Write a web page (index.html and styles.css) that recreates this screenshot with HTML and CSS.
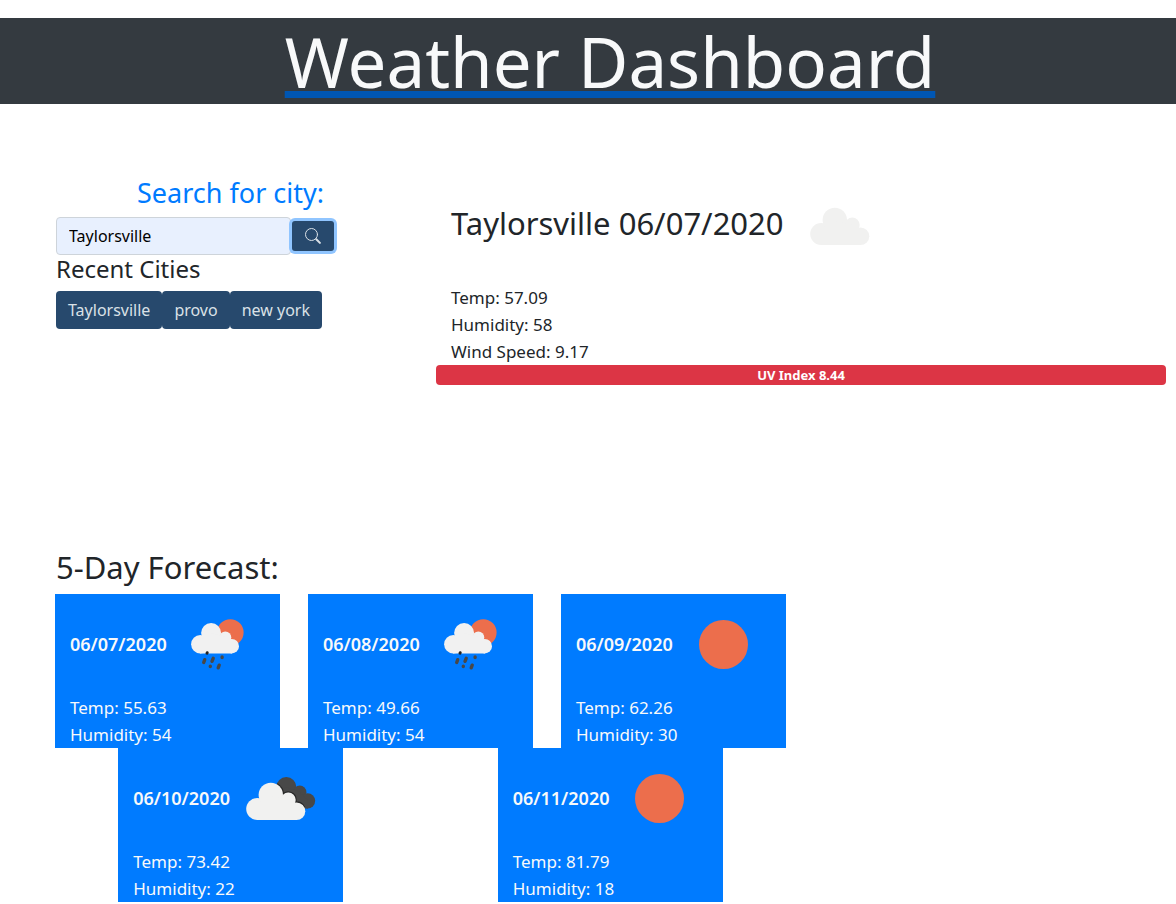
FILE: index.html
```html
<!DOCTYPE html>
<html lang="en">
<head>
<meta charset="utf-8">
<meta name="viewport" content="width=device-width, initial-scale=1">
<title>Weather Dashboard</title>
<link rel="stylesheet" href="styles.css">
</head>
<body>
<svg class="symbols" aria-hidden="true">
  <symbol id="cloud" viewBox="0 0 100 100">
    <g fill="#f1f1f0">
      <circle cx="27.2" cy="61" r="11"/>
      <circle cx="40.8" cy="46.9" r="12.2"/>
      <circle cx="58.3" cy="52" r="7.4"/>
      <circle cx="66.5" cy="63.2" r="8.8"/>
      <path d="M27 72V58l14-10 18 4 8 11v9z"/>
    </g>
  </symbol>
  <symbol id="broken-clouds" viewBox="0 0 100 100">
    <g fill="#484848">
      <circle cx="56.3" cy="39" r="10"/>
      <circle cx="69.8" cy="44.2" r="6.6"/>
      <circle cx="77.6" cy="52.8" r="7.6"/>
      <path d="M50 44l6-5 14 5 8 9v7.400H66z"/>
    </g>
    <g fill="none" stroke="#272727" stroke-width="1.400">
      <path d="M47 35.900a12.600 12.600 0 0 1 6.400 10.500"/>
      <path d="M52.500 46.500a7.800 7.800 0 0 1 13.500 5.500v2a9 9 0 0 1 8.500 5.500"/>
    </g>
    <use href="#cloud"/>
  </symbol>
  <symbol id="rain" viewBox="0 0 100 100">
    <circle cx="63.3" cy="38.5" r="13.3" fill="#ec6e4c"/>
    <g fill="#f1f1f1">
      <circle cx="33.3" cy="50.3" r="9.2"/>
      <circle cx="44.1" cy="39" r="10"/>
      <circle cx="58.3" cy="43.4" r="6"/>
      <circle cx="64.7" cy="52.2" r="7.300"/>
      <path d="M33 59.500V48l11-9 15 4 6 9v7.500z"/>
    </g>
    <g stroke="#484848" stroke-width="3.400" stroke-linecap="round">
      <path d="M37.700 65.700l-1 2.800M46.200 64.300l-1.200 3M55.100 63v.5M43.300 72.200v.3M52.200 71.200l-1 2.600"/>
      <path d="M40.200 58.700l-.2.500" stroke="#222" stroke-width="3"/>
    </g>
  </symbol>
  <symbol id="sun" viewBox="0 0 100 100">
    <circle cx="50.500" cy="50.500" r="24.500" fill="#ec6e4c"/>
  </symbol>
</svg>

<header class="banner">
  <h1 class="banner-title"><a class="banner-link" href="#">Weather Dashboard</a></h1>
</header>

<main class="page">
  <section class="top">
    <div class="search">
      <form class="search-form">
        <label class="search-label" for="city">Search for city:</label>
        <div class="search-row">
          <input class="search-input" id="city" type="text" value="Taylorsville">
          <button class="search-button" type="button" aria-label="Search">
            <svg class="search-icon" viewBox="0 0 16 16" fill="none" stroke="currentColor" stroke-linecap="round">
              <circle cx="6.500" cy="6.500" r="6"/>
              <path d="M11.300 11.300l3.600 3.600" stroke-width="2"/>
            </svg>
          </button>
        </div>
      </form>
      <h4 class="recent-title">Recent Cities</h4>
      <div class="recent">
        <button class="city-button" type="button">Taylorsville</button>
        <button class="city-button" type="button">provo</button>
        <button class="city-button" type="button">new york</button>
      </div>
    </div>

    <section class="current">
      <h2 class="current-title">Taylorsville 06/07/2020<svg class="weather-icon" viewBox="-5 0 100 100"><use href="#cloud" width="100" height="100"/></svg></h2>
      <p class="reading">Temp: 57.09</p>
      <p class="reading">Humidity: 58</p>
      <p class="reading">Wind Speed: 9.17</p>
      <div class="uv">UV Index 8.44</div>
    </section>
  </section>

  <section class="forecast">
    <h2 class="forecast-title">5-Day Forecast:</h2>
    <div class="cards">
      <article class="card">
        <h3 class="card-title">06/07/2020<svg class="weather-icon"><use href="#rain"/></svg></h3>
        <p class="card-reading">Temp: 55.63</p>
        <p class="card-reading">Humidity: 54</p>
      </article>
      <article class="card">
        <h3 class="card-title">06/08/2020<svg class="weather-icon"><use href="#rain"/></svg></h3>
        <p class="card-reading">Temp: 49.66</p>
        <p class="card-reading">Humidity: 54</p>
      </article>
      <article class="card">
        <h3 class="card-title">06/09/2020<svg class="weather-icon"><use href="#sun"/></svg></h3>
        <p class="card-reading">Temp: 62.26</p>
        <p class="card-reading">Humidity: 30</p>
      </article>
      <article class="card">
        <h3 class="card-title">06/10/2020<svg class="weather-icon"><use href="#broken-clouds"/></svg></h3>
        <p class="card-reading">Temp: 73.42</p>
        <p class="card-reading">Humidity: 22</p>
      </article>
      <article class="card">
        <h3 class="card-title">06/11/2020<svg class="weather-icon"><use href="#sun"/></svg></h3>
        <p class="card-reading">Temp: 81.79</p>
        <p class="card-reading">Humidity: 18</p>
      </article>
    </div>
  </section>
</main>
</body>
</html>
```

FILE: styles.css
```css
*,
*::before,
*::after {
  box-sizing: border-box;
}

body {
  margin: 0;
  padding-top: 18px;
  background: #fff;
  color: #212529;
  font-family: "Noto Sans", "Open Sans", sans-serif;
  font-size: 17px;
  line-height: 27px;
}

h1, h2, h3, h4, p {
  margin: 0;
  font-weight: 400;
}

.symbols {
  display: none;
}

.banner {
  padding-left: 44px;
  background: #343a40;
  text-align: center;
}

.banner-title {
  font-size: 69px;
  line-height: 86px;
}

.banner-link {
  color: #f8f9fa;
  text-decoration: underline;
  text-decoration-color: #0056b3;
  text-decoration-thickness: 7px;
  text-decoration-skip-ink: none;
  text-underline-offset: 3px;
}

.page {
  padding: 69px 10px 0 41px;
}

.top {
  display: grid;
  grid-template-columns: 38fr 73fr;
  padding-left: 15px;
}

.search {
  padding-top: 3px;
}

.search-form {
  width: 278px;
}

.search-label {
  display: block;
  padding-right: 10px;
  margin-bottom: 7px;
  color: #007bff;
  font-size: 27px;
  line-height: 34px;
  text-align: right;
}

.search-row {
  display: flex;
  align-items: center;
  gap: 1px;
}

.search-input {
  flex: 1;
  min-width: 0;
  height: 38px;
  padding: 6px 12px;
  border: 1px solid #ced4da;
  border-radius: 4px;
  background: #e8f0fe;
  color: #000;
  font: inherit;
  font-size: 16px;
}

.search-button {
  display: flex;
  align-items: center;
  justify-content: center;
  width: 42px;
  height: 30px;
  padding: 0;
  border: 0;
  border-radius: 3px;
  background: #27496d;
  box-shadow: 0 0 0 3px #90c5ff;
  color: #dae1e7;
}

.search-icon {
  width: 16px;
  height: 16px;
}

.recent-title {
  margin-bottom: 8px;
  font-size: 24px;
  line-height: 28px;
}

.recent {
  display: flex;
}

.city-button {
  height: 38px;
  padding: 0 12px;
  border: 0;
  border-radius: 4px;
  background: #27496d;
  color: #dae1e7;
  font: inherit;
  font-size: 16px;
}

.current-title {
  display: flex;
  align-items: center;
  gap: 5px;
  margin-bottom: 11px;
  padding-left: 15px;
  font-size: 31px;
  line-height: 38px;
}

.weather-icon {
  flex: none;
  width: 100px;
  height: 100px;
}

.reading {
  padding-left: 15px;
}

.uv {
  border-radius: 4px;
  background: #dc3545;
  color: #fff;
  font-size: 13px;
  font-weight: 700;
  line-height: 20px;
  text-align: center;
}

.forecast {
  max-width: 759px;
  padding-top: 163px;
}

.forecast-title {
  margin-bottom: 8px;
  padding-left: 15px;
  font-size: 31px;
  line-height: 38px;
}

.cards {
  display: flex;
  flex-wrap: wrap;
  justify-content: space-around;
}

.card {
  width: 225px;
  padding: 0 15px;
  background: #007bff;
  color: #f8f9fa;
}

.card-title {
  display: flex;
  align-items: center;
  justify-content: space-between;
  font-size: 18px;
  font-weight: 600;
}
```
